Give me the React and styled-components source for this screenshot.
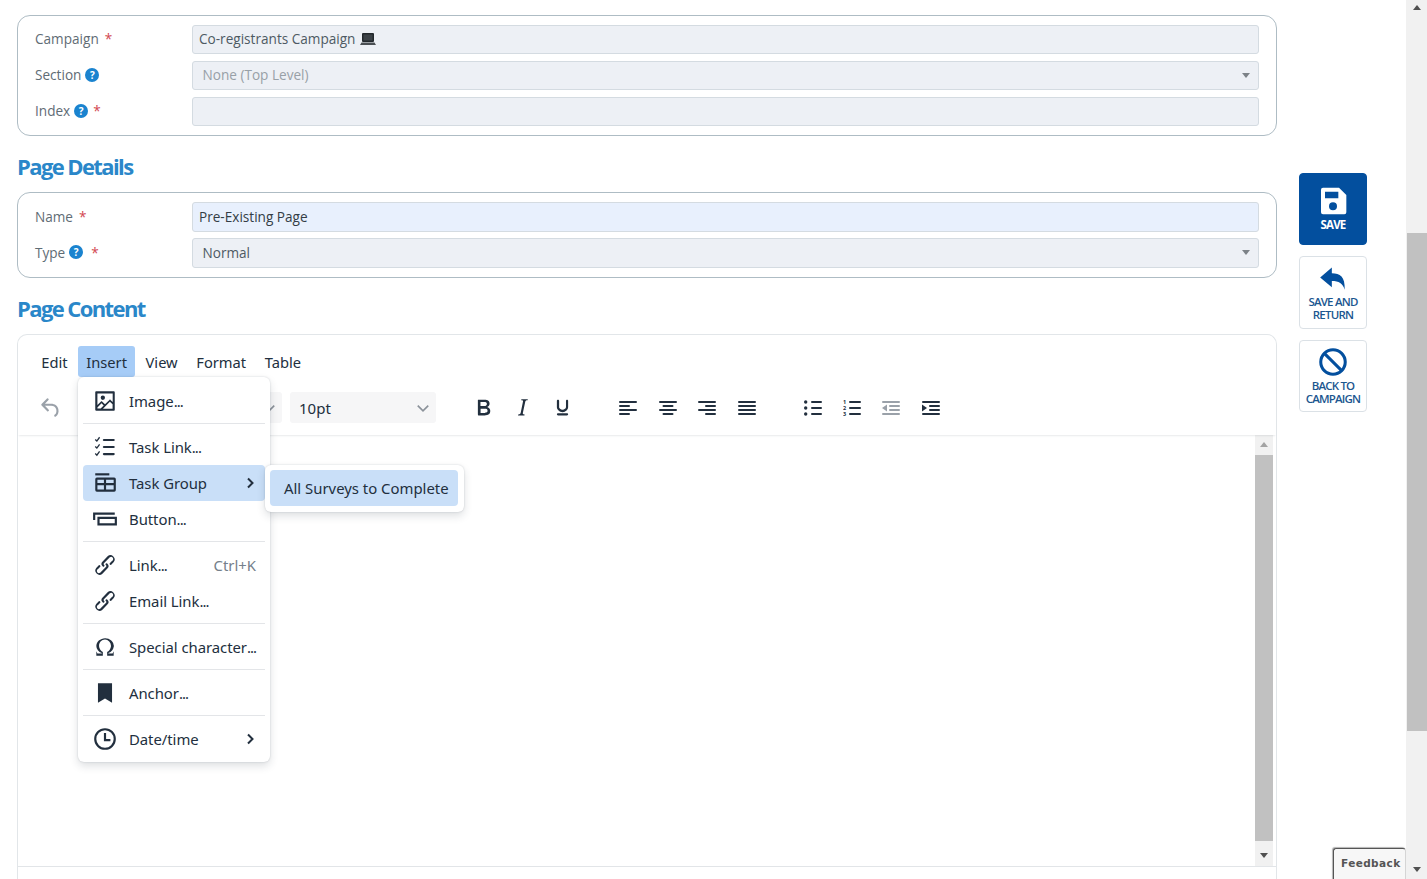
import React from "react";
import styled, { createGlobalStyle } from "styled-components";

const Global = createGlobalStyle`
  html, body { margin: 0; padding: 0; height: 100%; overflow: hidden; background: #fff; }
  body { font-family: "Open Sans", "Liberation Sans", sans-serif; }
`;

const Page = styled.div`
  width: 1427px;
  height: 879px;
  display: flex;
  overflow: hidden;
  position: relative;
`;

const Main = styled.div`
  width: 1260px;
  margin-left: 17px;
  padding-top: 15px;
  flex: none;
`;

const Card = styled.div`
  border: 1px solid #aebcc4;
  border-radius: 13px;
  padding: 9px 17px 9px 17px;
  display: flex;
  flex-direction: column;
  gap: ${(p) => (p.$tall ? 6 : 7)}px;
`;

const Row = styled.div`
  display: flex;
  align-items: center;
  height: ${(p) => (p.$tall ? 30 : 29)}px;
`;

const Label = styled.div`
  width: 157px;
  flex: none;
  display: flex;
  align-items: center;
  padding-bottom: 2px;
  font-size: 13.6px;
  color: #5f6c75;
`;

const Star = styled.span`
  color: #d2464f;
  margin-left: ${(p) => p.$gap}px;
`;

const Help = styled.span`
  width: 14px;
  height: 14px;
  border-radius: 50%;
  background: #1a83cf;
  color: #fff;
  font-size: 10px;
  font-weight: 700;
  line-height: 14px;
  text-align: center;
  margin-left: 4px;
`;

const Field = styled.div`
  flex: 1;
  height: 100%;
  box-sizing: border-box;
  display: flex;
  align-items: center;
  border: 1px solid #d4dbe1;
  border-radius: 3px;
  background: ${(p) => (p.$active ? "#e8f0fd" : "#edf0f5")};
  padding: 0 0 2px ${(p) => (p.$select ? 9.5 : 6)}px;
  font-size: 13.6px;
  color: ${(p) => p.$color || "#4d5a63"};
  position: relative;
`;

const Caret = styled.span`
  position: absolute;
  right: 8px;
  top: 11px;
  border-left: 4px solid transparent;
  border-right: 4px solid transparent;
  border-top: 5px solid #7c8287;
`;

const Laptop = styled.svg`
  width: 16px;
  height: 14px;
  margin-left: 5px;
`;

const Heading = styled.h2`
  margin: 0;
  height: 56px;
  box-sizing: border-box;
  padding-top: 4px;
  display: flex;
  align-items: center;
  font-size: 22px;
  font-weight: 700;
  letter-spacing: -1.6px;
  color: #2a87c9;
`;

const Editor = styled.div`
  border: 1px solid #e2e6e9;
  border-bottom: 0;
  border-radius: 10px 10px 0 0;
  height: 600px;
  position: relative;
  font-family: "Noto Sans", "Open Sans", sans-serif;
  color: #222f3e;
`;

const Header = styled.div`
  height: 100px;
  box-sizing: border-box;
  padding: 11px 0 0 15px;
  box-shadow: 0 2px 2px -1px rgba(34, 47, 62, 0.1);
  border-radius: 10px 10px 0 0;
  position: relative;
`;

const MenuBar = styled.div`
  display: flex;
  height: 31px;
  gap: 2px;
`;

const MenuButton = styled.div`
  height: 31px;
  display: flex;
  align-items: center;
  padding: 0 8.3px;
  font-size: 14.7px;
  border-radius: 3px;
  background: ${(p) => (p.$active ? "#a6ccf7" : "transparent")};
`;

const ToolBar = styled.div`
  display: flex;
  align-items: center;
  height: 31px;
  margin-top: 15px;
`;

const ToolButton = styled.div`
  flex: none;
  width: ${(p) => p.$w}px;
  margin-right: ${(p) => p.$gap || 0}px;
  height: 31px;
  display: flex;
  align-items: center;
  justify-content: center;
  color: ${(p) => (p.$muted ? "#9aa1a9" : "#222f3e")};
`;

const Dropdown = styled.div`
  flex: none;
  width: ${(p) => p.$w}px;
  margin-right: ${(p) => p.$gap}px;
  height: 31px;
  box-sizing: border-box;
  padding: 0 6px 0 9px;
  display: flex;
  align-items: center;
  justify-content: space-between;
  background: #f6f6f7;
  border-radius: 3px;
  font-size: 15px;
`;

const Body = styled.div`
  height: 431px;
  border-bottom: 1px solid #e2e5e8;
  display: flex;
  justify-content: flex-end;
  padding-right: 3px;
`;

const EditorScroll = styled.div`
  width: 18px;
  background: #f1f1f1;
  display: flex;
  flex-direction: column;
  align-items: center;
  justify-content: space-between;
  padding: 7px 0 8px;
  box-sizing: border-box;
`;

const Thumb = styled.div`
  width: 100%;
  background: #c1c1c1;
  flex: 1;
  margin: 8px 0 12px;
`;

const ArrowUp = styled.span`
  flex: none;
  border-left: 4px solid transparent;
  border-right: 4px solid transparent;
  border-bottom: 5px solid ${(p) => p.$color || "#a3a3a3"};
`;

const ArrowDown = styled.span`
  flex: none;
  display: block;
  width: 0;
  border-left: 4.5px solid transparent;
  border-right: 4.5px solid transparent;
  border-top: 5px solid #505050;
`;

const Popup = styled.div`
  position: absolute;
  background: #fff;
  border-radius: 6px;
  box-shadow: 0 0 2px rgba(34, 47, 62, 0.2), 0 4px 8px rgba(34, 47, 62, 0.15);
  box-sizing: border-box;
`;

const InsertMenu = styled(Popup)`
  left: 60px;
  top: 42px;
  width: 192px;
  padding: 6px 5px 5px;
`;

const SubMenu = styled(Popup)`
  left: 247px;
  top: 130px;
  width: 199px;
  padding: 5px 6px 6px 5px;
`;

const Item = styled.div`
  height: 36px;
  display: flex;
  align-items: center;
  padding: ${(p) => (p.$plain ? "0 9px 0 14px" : "0 9px 0 9px")};
  border-radius: 4px;
  font-size: 14.9px;
  white-space: nowrap;
  background: ${(p) => (p.$active ? "#c9dff8" : "transparent")};
`;

const ItemIcon = styled.svg`
  width: 26px;
  height: 26px;
  flex: none;
  margin-right: 11px;
  fill: #222f3e;
`;

const ItemText = styled.span`
  flex: 1;
  letter-spacing: -0.05px;
`;

const Dots = styled.span`
  letter-spacing: -0.9px;
`;

const Shortcut = styled.span`
  color: #75808b;
  margin-right: 0;
`;

const Separator = styled.div`
  height: 1px;
  background: #e3e5e8;
  margin: 4px 0 5px;
`;

const Actions = styled.div`
  margin-left: 22px;
  padding-top: 173px;
  width: 68px;
  flex: none;
  display: flex;
  flex-direction: column;
  gap: 11px;
`;

const Action = styled.div`
  height: ${(p) => p.$h}px;
  box-sizing: border-box;
  border: 1px solid ${(p) => (p.$primary ? "#034f9e" : "#dbe1e6")};
  border-radius: 4px;
  background: ${(p) => (p.$primary ? "#034f9e" : "#fff")};
  color: ${(p) => (p.$primary ? "#fff" : "#1b568f")};
  display: flex;
  flex-direction: column;
  align-items: center;
  padding-top: ${(p) => p.$top}px;
  font-size: 11.5px;
  font-weight: ${(p) => (p.$primary ? 700 : 600)};
  letter-spacing: -0.8px;
  line-height: 13px;
  text-align: center;
`;

const ActionIcon = styled.svg`
  width: ${(p) => p.$size || 28}px;
  height: ${(p) => p.$size || 28}px;
  margin-bottom: ${(p) => p.$gap}px;
  color: ${(p) => (p.$light ? "#fff" : "#034f9e")};
  fill: currentColor;
`;

const PageScroll = styled.div`
  position: absolute;
  right: 0;
  top: 0;
  bottom: 0;
  width: 21px;
  background: #f1f1f1;
  box-sizing: border-box;
  padding: 5px 0 0 1px;
  display: flex;
  flex-direction: column;
  align-items: center;
`;

const PageThumb = styled.div`
  width: 100%;
  flex: none;
  height: 498px;
  margin-top: 223px;
  background: #c1c1c1;
`;

const PageDown = styled.div`
  flex: none;
  margin-top: 136px;
`;

const Feedback = styled.div`
  position: absolute;
  left: 1333px;
  top: 848px;
  width: 73px;
  height: 40px;
  box-sizing: border-box;
  background: #f7f7f7;
  border: 1px solid #555;
  border-right-color: #d5d5d5;
  border-radius: 3px 3px 0 0;
  box-shadow: -1px -1px 1px rgba(0, 0, 0, 0.3);
  padding: 8px 0 0 7px;
  font-family: "DejaVu Sans", sans-serif;
  font-size: 10.5px;
  font-weight: 700;
  letter-spacing: 0.4px;
  color: #555;
`;

const Icon = ({ w, h, children, vb = "0 0 24 24" }) => (
  <svg width={w} height={h} viewBox={vb} preserveAspectRatio="none" fill="currentColor">
    {children}
  </svg>
);

const Chevron = ({ color = "#222f3e", w = 2, size = 12, dir = "right" }) => (
  <svg width={size} height={size} viewBox="0 0 12 12" fill="none" stroke={color} strokeWidth={w}>
    <path d={dir === "right" ? "M4 1.5 8.5 6 4 10.5" : "M1.5 4 6 8.5 10.5 4"} />
  </svg>
);

const LinkPath = "M6.2 12.3a1 1 0 011.4 1.4l-2 2a2 2 0 102.6 2.8l4.8-4.8a1 1 0 000-1.4 1 1 0 111.4-1.3 2.9 2.9 0 010 4L9.6 20a3.9 3.9 0 01-5.5-5.5l2-2zm11.6-.6a1 1 0 01-1.4-1.4l2-2a2 2 0 10-2.6-2.8L11 10.3a1 1 0 000 1.4A1 1 0 119.6 13a2.9 2.9 0 010-4L14.4 4a3.9 3.9 0 015.5 5.5l-2 2z";

const Lines = ({ rows }) => (
  <Icon w={18} h={16} vb="0 0 18 16">
    {rows.map(([x, y, width]) => (
      <rect key={y} x={x} y={y} width={width} height="2" rx="1" />
    ))}
  </Icon>
);

export default function App() {
  return (
    <Page>
      <Global />
      <Main>
        <Card>
          <Row>
            <Label>Campaign<Star $gap={6}>*</Star></Label>
            <Field>
              Co-registrants Campaign
              <Laptop viewBox="0 0 16 14">
                <rect x="2" y="1" width="12" height="9" rx="1" fill="#23282c" />
                <rect x="3.5" y="2.500" width="9" height="6" fill="#3c4247" />
                <path d="M1.500 10.500h13l1.500 2.500H0z" fill="#4a4f53" />
              </Laptop>
            </Field>
          </Row>
          <Row>
            <Label>Section<Help>?</Help></Label>
            <Field $select $color="#98a0a7">None (Top Level)<Caret /></Field>
          </Row>
          <Row>
            <Label>Index<Help>?</Help><Star $gap={5}>*</Star></Label>
            <Field />
          </Row>
        </Card>
        <Heading>Page Details</Heading>
        <Card $tall>
          <Row $tall>
            <Label>Name<Star $gap={6}>*</Star></Label>
            <Field $active $color="#333d45">Pre-Existing Page</Field>
          </Row>
          <Row $tall>
            <Label>Type<Help>?</Help><Star $gap={8}>*</Star></Label>
            <Field $select>Normal<Caret /></Field>
          </Row>
        </Card>
        <Heading>Page Content</Heading>
        <Editor>
          <Header>
            <MenuBar>
              <MenuButton>Edit</MenuButton>
              <MenuButton $active>Insert</MenuButton>
              <MenuButton>View</MenuButton>
              <MenuButton>Format</MenuButton>
              <MenuButton>Table</MenuButton>
            </MenuBar>
            <ToolBar>
              <ToolButton $w={36} $muted $gap={33}>
                <Icon w={26} h={26}>
                  <path d="M6.4 8H12c3.7 0 6.2 2 6.8 5.1.6 2.7-.4 5.6-2.3 6.8a1 1 0 01-1-1.8c1.1-.6 1.800-2.700 1.400-4.600-.5-2.100-2.100-3.500-4.900-3.500H6.400l3.300 3.300a1 1 0 11-1.400 1.400l-5-5a1 1 0 010-1.400l5-5a1 1 0 011.400 1.400L6.400 8z" />
                </Icon>
              </ToolButton>
              <Dropdown $w={180} $gap={8}><span /><Chevron size={14} color="#8b929a" w={1.4} dir="down" /></Dropdown>
              <Dropdown $w={146} $gap={27}>10pt<Chevron size={14} color="#8b929a" w={1.4} dir="down" /></Dropdown>
              <ToolButton $w={40}>
                <Icon w={27} h={27}>
                  <path d="M7.8 19c-.3 0-.5 0-.6-.2l-.2-.5V5.7c0-.2 0-.4.2-.5l.6-.2h5c1.5 0 2.7.3 3.5 1 .7.6 1.1 1.4 1.1 2.5a3 3 0 01-.6 1.9c-.4.6-1 1-1.6 1.2.4.1.9.3 1.3.6s.8.7 1 1.2c.4.4.5 1 .5 1.6 0 1.3-.4 2.3-1.3 3-.8.7-2.1 1-3.8 1H7.8zm5-8.3c.6 0 1.2-.1 1.6-.5.4-.3.6-.7.6-1.3 0-1.1-.8-1.7-2.3-1.7H9.3v3.5h3.4zm.5 6c.7 0 1.3-.1 1.7-.4.4-.4.6-.9.6-1.5s-.2-1-.7-1.4c-.4-.3-1-.4-2-.4H9.4v3.8h4z" />
                </Icon>
              </ToolButton>
              <ToolButton $w={39}>
                <Icon w={27} h={27}>
                  <path d="M16.7 4.7l-.1.9h-.3c-.6 0-1 0-1.4.3-.3.3-.4.6-.5 1.1l-2.1 9.8v.6c0 .5.4.8 1.4.8h.2l-.2.8H8l.2-.8h.2c1.1 0 1.8-.5 2-1.5l2-9.8.1-.5c0-.6-.4-.8-1.4-.8h-.3l.2-.9h5.8z" />
                </Icon>
              </ToolButton>
              <ToolButton $w={40} $gap={26}>
                <Icon w={27} h={27}>
                  <path d="M16 5c.6 0 1 .4 1 1v5.5a4 4 0 01-.4 1.8l-1 1.4a5.3 5.3 0 01-5.5 1 5 5 0 01-1.6-1c-.5-.4-.8-.9-1.1-1.4a4 4 0 01-.4-1.8V6c0-.6.4-1 1-1s1 .4 1 1v5.5c0 .3 0 .6.2 1l.6.7a3.3 3.3 0 002.2.8 3.4 3.4 0 002.2-.8c.3-.2.5-.5.7-.8l.2-.9V6c0-.6.4-1 1-1zM8 17h8c.6 0 1 .4 1 1s-.4 1-1 1H8a1 1 0 010-2z" />
                </Icon>
              </ToolButton>
              <ToolButton $w={40}><Lines rows={[[0, 1, 18], [0, 5, 11], [0, 9, 18], [0, 13, 11]]} /></ToolButton>
              <ToolButton $w={39}><Lines rows={[[0, 1, 18], [3.5, 5, 11], [0, 9, 18], [3.5, 13, 11]]} /></ToolButton>
              <ToolButton $w={40}><Lines rows={[[0, 1, 18], [7, 5, 11], [0, 9, 18], [7, 13, 11]]} /></ToolButton>
              <ToolButton $w={39} $gap={27}><Lines rows={[[0, 1, 18], [0, 5, 18], [0, 9, 18], [0, 13, 18]]} /></ToolButton>
              <ToolButton $w={39}>
                <Icon w={18} h={16} vb="0 0 18 16">
                  <circle cx="1.7" cy="2" r="1.7" /><circle cx="1.7" cy="8" r="1.7" /><circle cx="1.7" cy="14" r="1.7" />
                  <rect x="7" y="1" width="11" height="2" rx="1" /><rect x="7" y="7" width="11" height="2" rx="1" /><rect x="7" y="13" width="11" height="2" rx="1" />
                </Icon>
              </ToolButton>
              <ToolButton $w={39}>
                <Icon w={18} h={18} vb="0 0 18 18">
                  <text x="0" y="5" fontSize="5.5" fontWeight="700" fontFamily="Open Sans">1</text>
                  <text x="0" y="11" fontSize="5.5" fontWeight="700" fontFamily="Open Sans">2</text>
                  <text x="0" y="17" fontSize="5.5" fontWeight="700" fontFamily="Open Sans">3</text>
                  <rect x="6" y="2" width="12" height="2" rx="1" /><rect x="6" y="8" width="12" height="2" rx="1" /><rect x="6" y="14" width="12" height="2" rx="1" />
                </Icon>
              </ToolButton>
              <ToolButton $w={40} $muted>
                <Icon w={18} h={16} vb="0 0 18 16">
                  <rect x="0" y="1" width="18" height="2" rx="1" /><rect x="7" y="5" width="11" height="2" rx="1" /><rect x="7" y="9" width="11" height="2" rx="1" /><rect x="0" y="13" width="18" height="2" rx="1" />
                  <path d="M5 4.5v7L0 8z" />
                </Icon>
              </ToolButton>
              <ToolButton $w={39}>
                <Icon w={18} h={16} vb="0 0 18 16">
                  <rect x="0" y="1" width="18" height="2" rx="1" /><rect x="7" y="5" width="11" height="2" rx="1" /><rect x="7" y="9" width="11" height="2" rx="1" /><rect x="0" y="13" width="18" height="2" rx="1" />
                  <path d="M0 4.5v7L5 8z" />
                </Icon>
              </ToolButton>
            </ToolBar>
          </Header>
          <Body>
            <EditorScroll>
              <ArrowUp />
              <Thumb />
              <ArrowDown />
            </EditorScroll>
          </Body>
          <InsertMenu>
            <Item>
              <ItemIcon viewBox="0 0 24 24"><path d="M5 15.7l3.3-3.2c.3-.3.7-.3 1 0L12 15l4.1-4c.3-.4.8-.4 1 0l2 1.9V5H5v10.7zM5 18V19h3l2.8-2.9-2-2L5 17.9zm14-3l-2.5-2.4-6.4 6.5H19v-4zM4 3h16c.6 0 1 .4 1 1v16c0 .6-.4 1-1 1H4a1 1 0 01-1-1V4c0-.6.4-1 1-1zm6 8a2 2 0 100-4 2 2 0 000 4z" /></ItemIcon>
              <ItemText>Image<Dots>...</Dots></ItemText>
            </Item>
            <Separator />
            <Item>
              <ItemIcon viewBox="0 0 24 24">
                <rect x="10" y="4.5" width="11" height="2" rx="1" /><rect x="10" y="11" width="11" height="2" rx="1" /><rect x="10" y="17.5" width="11" height="2" rx="1" />
                <path d="M3 5l1.5 1.5L7 3M3 11.5L4.5 13 7 9.5M3 18l1.5 1.5L7 16" fill="none" stroke="#222f3e" strokeWidth="1.2" />
              </ItemIcon>
              <ItemText>Task Link<Dots>...</Dots></ItemText>
            </Item>
            <Item $active>
              <ItemIcon viewBox="0 0 24 24">
                <rect x="3" y="3" width="13" height="2" />
                <path fillRule="evenodd" d="M4.5 7h16A1.5 1.5 0 0 1 22 8.5v10a1.5 1.5 0 0 1-1.5 1.5h-16A1.5 1.5 0 0 1 3 18.5v-10A1.5 1.5 0 0 1 4.5 7zM5 9v3h6V9zm8 0v3h7V9zM5 14v4h6v-4zm8 0v4h7v-4z" />
              </ItemIcon>
              <ItemText>Task Group</ItemText>
              <Chevron />
            </Item>
            <Item>
              <ItemIcon viewBox="0 0 24 24">
                <path fillRule="evenodd" d="M1 6h20v2H3v5H1zM5 10h18v8H5zm2 2v4h14v-4z" />
              </ItemIcon>
              <ItemText>Button<Dots>...</Dots></ItemText>
            </Item>
            <Separator />
            <Item>
              <ItemIcon viewBox="0 0 24 24"><path d={LinkPath} /></ItemIcon>
              <ItemText>Link<Dots>...</Dots></ItemText>
              <Shortcut>Ctrl+K</Shortcut>
            </Item>
            <Item>
              <ItemIcon viewBox="0 0 24 24"><path d={LinkPath} /></ItemIcon>
              <ItemText>Email Link<Dots>...</Dots></ItemText>
            </Item>
            <Separator />
            <Item>
              <ItemIcon viewBox="0 0 24 24"><path d="M15 18h4l1-2v4h-6v-3.3l1.4-1a6 6 0 001.8-2.9 6.3 6.3 0 00-.1-4.1 5.8 5.8 0 00-3-3.2c-.6-.3-1.3-.5-2.1-.5a5.1 5.1 0 00-3.9 1.8 6.3 6.3 0 00-1.3 6 6.2 6.2 0 001.8 2.8l1.4 1.1V20H4v-4l1 2h4v-.5l-2-1L5.4 15A6.5 6.5 0 014 11c0-1 .2-1.9.6-2.7A7 7 0 016.3 6C7.1 5.4 8 5 9 4.5c1-.3 2-.5 3.1-.5a8.8 8.8 0 015.7 2 7 7 0 011.7 2.3 6 6 0 01.2 4.8c-.2.7-.6 1.3-1 1.9a7.6 7.6 0 01-3.6 2.5v.5z" /></ItemIcon>
              <ItemText>Special character<Dots>...</Dots></ItemText>
            </Item>
            <Separator />
            <Item>
              <ItemIcon viewBox="0 0 24 24"><path d="M5.500 3h13v18l-6.500-4-6.500 4z" /></ItemIcon>
              <ItemText>Anchor<Dots>...</Dots></ItemText>
            </Item>
            <Separator />
            <Item>
              <ItemIcon viewBox="0 0 24 24">
                <circle cx="12" cy="12" r="9" fill="none" stroke="#222f3e" strokeWidth="2" />
                <path d="M12 6.5V13h5" fill="none" stroke="#222f3e" strokeWidth="2" />
              </ItemIcon>
              <ItemText>Date/time</ItemText>
              <Chevron />
            </Item>
          </InsertMenu>
          <SubMenu>
            <Item $active $plain>All Surveys to Complete</Item>
          </SubMenu>
        </Editor>
      </Main>
      <Actions>
        <Action $primary $h={72} $top={11}>
          <ActionIcon $light $size={32} $gap={1} viewBox="0 0 24 24">
            <path fillRule="evenodd" d="M4.5 2h12L22 7.5v13a1.5 1.5 0 0 1-1.5 1.5h-16A1.5 1.5 0 0 1 3 20.500v-17A1.500 1.500 0 0 1 4.500 2zM6 5v5h10V5zm6 8a3 3 0 1 0 0 6 3 3 0 0 0 0-6z" />
          </ActionIcon>
          SAVE
        </Action>
        <Action $h={73} $top={7}>
          <ActionIcon $gap={3} viewBox="0 0 24 24">
            <path d="M11 3v5c7 0 11.500 3 11 14-1.500-5.500-5-7.500-11-7.500V20L1 11.500z" />
          </ActionIcon>
          SAVE AND<br />RETURN
        </Action>
        <Action $h={72} $top={7}>
          <ActionIcon $gap={3} viewBox="0 0 24 24">
            <circle cx="12" cy="12" r="10.500" fill="none" stroke="currentColor" strokeWidth="2.600" />
            <path d="M5 5l14 14" stroke="currentColor" strokeWidth="2.600" />
          </ActionIcon>
          BACK TO<br />CAMPAIGN
        </Action>
      </Actions>
      <PageScroll>
        <ArrowUp $color="#505050" />
        <PageThumb />
        <PageDown><ArrowDown /></PageDown>
      </PageScroll>
      <Feedback>Feedback</Feedback>
    </Page>
  );
}
